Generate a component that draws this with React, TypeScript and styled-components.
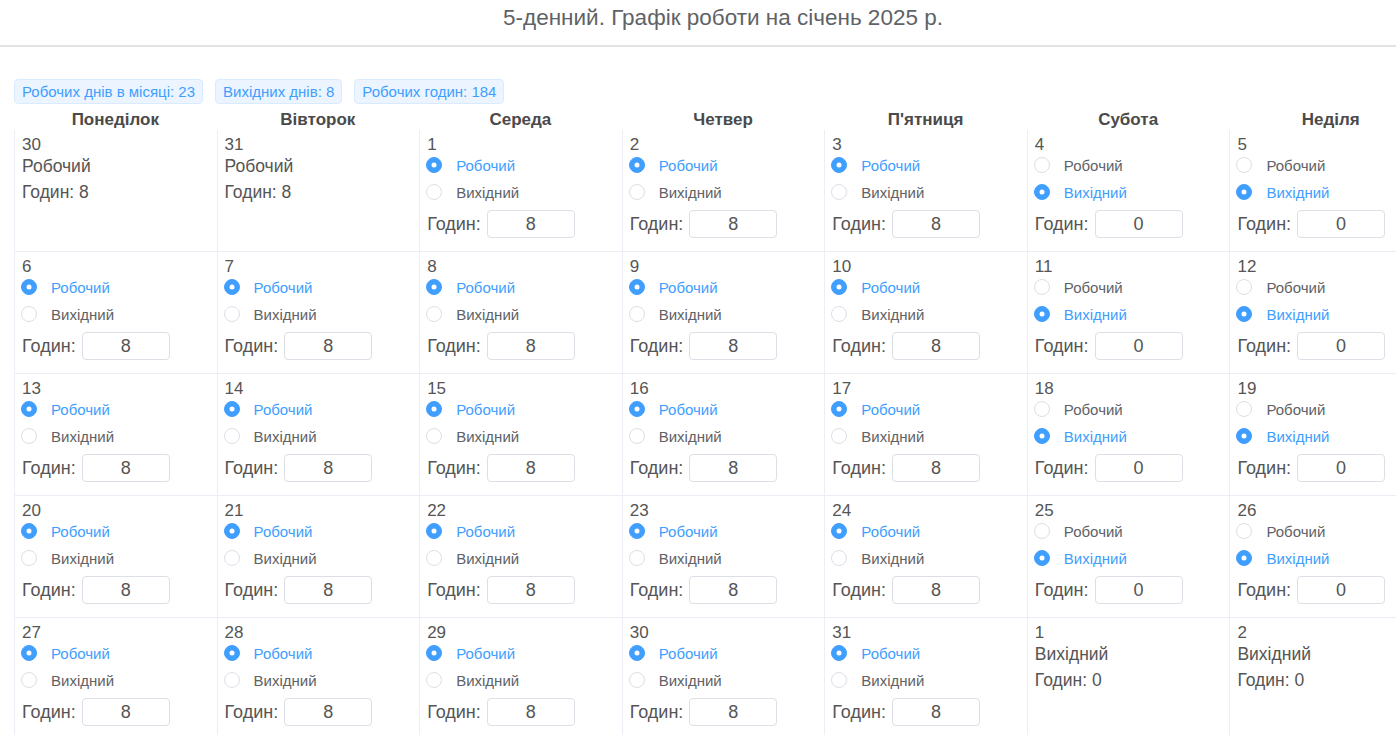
import React from "react";
import styled, { createGlobalStyle } from "styled-components";

const GlobalStyle = createGlobalStyle`
  html, body {
    margin: 0;
    padding: 0;
    background: #fff;
    overflow: hidden;
  }
  body {
    font-family: "Liberation Sans", Arial, sans-serif;
    color: #555;
  }
`;

type DayKind = "work" | "off";
type Cell = { day: number; kind: DayKind; fixed: boolean };

const weekDays = ["Понеділок", "Вівторок", "Середа", "Четвер", "П'ятниця", "Субота", "Неділя"];

const buildCells = (): Cell[] => {
  const cells: Cell[] = [
    { day: 30, kind: "work", fixed: true },
    { day: 31, kind: "work", fixed: true },
  ];
  for (let d = 1; d <= 31; d++) {
    const col = (d + 1) % 7; // Jan 1 2025 is Wednesday (col 2)
    cells.push({ day: d, kind: col >= 5 ? "off" : "work", fixed: false });
  }
  cells.push({ day: 1, kind: "off", fixed: true });
  cells.push({ day: 2, kind: "off", fixed: true });
  return cells;
};

const Radio = ({ checked, label }: { checked: boolean; label: string }) => (
  <RadioRow $checked={checked}>
    <RadioDot $checked={checked} />
    <span>{label}</span>
  </RadioRow>
);

export default function App() {
  const cells = buildCells();
  return (
    <>
      <GlobalStyle />
      <Page>
        <TitleBar>
          <Title>5-денний. Графік роботи на січень 2025 р.</Title>
        </TitleBar>
        <Content>
          <Tags>
            <Tag>Робочих днів в місяці: 23</Tag>
            <Tag>Вихідних днів: 8</Tag>
            <Tag>Робочих годин: 184</Tag>
          </Tags>
          <Grid>
            {weekDays.map((w) => (
              <HeadCell key={w}>{w}</HeadCell>
            ))}
            {cells.map((c, i) => (
              <DayCell key={i}>
                <DayNum>{c.day}</DayNum>
                {c.fixed ? (
                  <>
                    <StaticKind>{c.kind === "work" ? "Робочий" : "Вихідний"}</StaticKind>
                    <StaticHours>Годин: {c.kind === "work" ? 8 : 0}</StaticHours>
                  </>
                ) : (
                  <>
                    <RadioGroup>
                      <Radio checked={c.kind === "work"} label="Робочий" />
                      <Radio checked={c.kind === "off"} label="Вихідний" />
                    </RadioGroup>
                    <HoursRow>
                      <HoursLabel>Годин:</HoursLabel>
                      <HoursInput readOnly value={c.kind === "work" ? "8" : "0"} />
                    </HoursRow>
                  </>
                )}
              </DayCell>
            ))}
          </Grid>
        </Content>
      </Page>
    </>
  );
}

const Page = styled.div`
  width: 1446px;
`;

const TitleBar = styled.header`
  height: 45px;
  border-bottom: 2px solid #e2e2e2;
`;

const Title = styled.h1`
  margin: 0;
  text-align: center;
  font-size: 22.5px;
  font-weight: normal;
  line-height: 36px;
  color: #606266;
`;

const Content = styled.main`
  padding: 32px 14px 0;
`;

const Tags = styled.div`
  display: flex;
  gap: 12px;
`;

const Tag = styled.span`
  display: inline-flex;
  align-items: center;
  height: 23px;
  padding: 0 7px;
  font-size: 15px;
  color: #409eff;
  background: #ecf5ff;
  border: 1px solid #d9ecff;
  border-radius: 4px;
`;

const Grid = styled.div`
  display: grid;
  grid-template-columns: repeat(7, 1fr);
  width: 1418px;
`;

const HeadCell = styled.div`
  height: 26px;
  line-height: 32px;
  text-align: center;
  font-size: 17px;
  font-weight: bold;
  color: #4a4a4a;
`;

const DayCell = styled.div`
  box-sizing: border-box;
  height: 122px;
  padding: 6px 6px 0 7px;
  border-left: 1px solid #ebeef5;
  border-bottom: 1px solid #ebeef5;
  display: flex;
  flex-direction: column;
`;

const DayNum = styled.div`
  font-size: 17px;
  line-height: 18px;
  color: #555;
`;

const StaticKind = styled.div`
  margin-top: 2px;
  font-size: 17.5px;
  line-height: 20px;
  color: #555;
`;

const StaticHours = styled.div`
  margin-top: 6px;
  font-size: 17.5px;
  line-height: 20px;
  color: #555;
`;

const RadioGroup = styled.div`
  display: flex;
  flex-direction: column;
  gap: 5px;
`;

const RadioRow = styled.label<{ $checked: boolean }>`
  display: flex;
  align-items: center;
  gap: 14px;
  height: 22px;
  font-size: 15px;
  color: ${(p) => (p.$checked ? "#409eff" : "#606266")};
`;

const RadioDot = styled.span<{ $checked: boolean }>`
  position: relative;
  box-sizing: border-box;
  width: 16px;
  height: 16px;
  margin-left: -1px;
  border-radius: 50%;
  border: 1px solid ${(p) => (p.$checked ? "#409eff" : "#dcdfe6")};
  background: ${(p) => (p.$checked ? "#409eff" : "#fff")};
  &::after {
    content: "";
    display: ${(p) => (p.$checked ? "block" : "none")};
    position: absolute;
    left: 50%;
    top: 50%;
    width: 5px;
    height: 5px;
    border-radius: 50%;
    background: #fff;
    transform: translate(-50%, -50%);
  }
`;

const HoursRow = styled.div`
  display: flex;
  align-items: center;
  gap: 6px;
  margin-top: 7px;
`;

const HoursLabel = styled.span`
  font-size: 18px;
  color: #555;
`;

const HoursInput = styled.input`
  box-sizing: border-box;
  width: 88px;
  height: 28px;
  border: 1px solid #dcdfe6;
  border-radius: 4px;
  text-align: center;
  font-family: "Liberation Sans", Arial, sans-serif;
  font-size: 18px;
  color: #555;
  outline: none;
  padding: 0;
`;
